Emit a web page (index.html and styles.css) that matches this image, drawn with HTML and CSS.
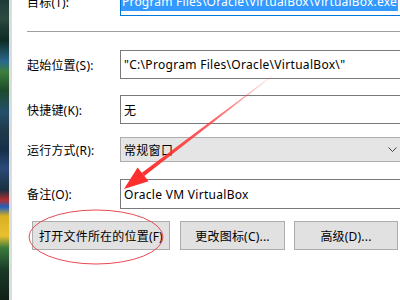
FILE: index.html
```html
<!DOCTYPE html>
<html lang="zh-CN">

<head>
    <meta charset="UTF-8">
    <title>VirtualBox 属性</title>
    <link rel="stylesheet" href="styles.css">
</head>

<body>
    <div class="desk"></div>
    <div class="edge"></div>

    <div class="dialog">
        <div class="row row-target">
            <label class="lbl">目标(T):</label>
            <div class="field field-active">
                <span class="sel">Program Files\Oracle\VirtualBox\VirtualBox.exe</span>
                <i class="caret"></i>
            </div>
        </div>

        <div class="sep"></div>

        <div class="row row-start">
            <label class="lbl">起始位置(S):</label>
            <div class="field">"C:\Program Files\Oracle\VirtualBox\"</div>
        </div>

        <div class="row row-key">
            <label class="lbl">快捷键(K):</label>
            <div class="field">无</div>
        </div>

        <div class="row row-run">
            <label class="lbl">运行方式(R):</label>
            <div class="field combo">
                <span class="flexgrow">常规窗口</span>
                <svg class="chevron" width="9" height="5" viewBox="0 0 9 5">
                    <polyline points="0.5,0.5 4.5,4.5 8.5,0.5" fill="none" stroke="#404040" stroke-width="1" />
                </svg>
            </div>
        </div>

        <div class="row row-note">
            <label class="lbl">备注(O):</label>
            <div class="field">Oracle VM VirtualBox</div>
        </div>

        <div class="buttons">
            <button class="btn btn-open">打开文件所在的位置(F)</button>
            <button class="btn btn-icon">更改图标(C)...</button>
            <button class="btn btn-adv">高级(D)...</button>
        </div>
    </div>

    <!-- hand drawn marks on top of the screenshot -->
    <svg class="marks" width="400" height="300" viewBox="0 0 400 300">
        <defs>
            <linearGradient id="fade" gradientUnits="userSpaceOnUse" x1="272" y1="76" x2="140" y2="176">
                <stop offset="0" stop-color="#ff3b3b" stop-opacity="0.15" />
                <stop offset="0.45" stop-color="#ff3b3b" stop-opacity="0.8" />
                <stop offset="1" stop-color="#ff2e2e" stop-opacity="1" />
            </linearGradient>
        </defs>
        <polygon points="272.2,76.2 271.8,75.8 141.9,172.8 144.3,176.0" fill="url(#fade)" />
        <polygon points="124,189 137.6,167.6 148.6,181.2" fill="#ff2e2e" />
        <ellipse cx="96" cy="237" rx="67" ry="27" fill="none" stroke="#e84a55" stroke-width="1" />
    </svg>
</body>

</html>
```

FILE: styles.css
```css
html,
body {
    margin: 0;
    width: 400px;
    height: 300px;
    overflow: hidden;
}

body {
    display: flex;
    position: relative;
    background: #fff;
    font-family: "Noto Sans", "Noto Sans CJK SC", sans-serif;
    font-size: 12px;
    color: #000;
}

.desk {
    width: 9px;
    flex: none;
    background: linear-gradient(180deg,
            #1d3a3a 0px, #2c4a40 18px, #0e2a24 40px,
            #2a6a8c 62px, #3d7f3a 72px, #1c4a2c 90px,
            #24506a 112px, #1f3a4a 130px, #16304a 150px,
            #2a4a78 168px, #1a3040 190px, #b03030 200px,
            #2060c0 207px, #d8b020 216px, #e8c030 236px,
            #3a7a3a 248px, #1a3a28 270px, #102018 300px);
}

.edge {
    width: 3px;
    flex: none;
    background: #dcdcdc;
}

.dialog {
    flex: 1;
    padding: 0 4px 0 15px;
}

.row {
    display: flex;
    align-items: center;
    height: 29px;
}

.lbl {
    width: 93px;
    flex: none;
    white-space: nowrap;
    letter-spacing: 0.2px;
}

.field {
    flex: 1;
    height: 100%;
    box-sizing: border-box;
    border: 1px solid #7a7a7a;
    display: flex;
    align-items: center;
    padding-left: 3px;
    white-space: nowrap;
    overflow: hidden;
    letter-spacing: 0.3px;
}

.row-target {
    margin-top: -13px;
}

.field-active {
    border-color: #0078d7;
    padding: 0 2px 0 1px;
    justify-content: flex-end;
}

.sel {
    min-width: 100%;
    text-align: right;
    line-height: 18px;
    letter-spacing: 0.2px;
    background: #3399ff;
    color: #fff;
}

.caret {
    width: 1px;
    height: 18px;
    flex: none;
    background: #e07a20;
}

.sep {
    height: 1px;
    margin: 15px -4px 0 0;
    background: #a0a0a0;
}

.row-start {
    margin-top: 18px;
}

.row-key {
    margin-top: 16px;
}

.row-run {
    height: 25px;
    margin-top: 13px;
}

.combo {
    background: #e5e5e5;
    border-color: #adadad;
    padding-right: 3px;
}

.flexgrow {
    flex-grow: 1;
}

.chevron {
    display: block;
}

.row-note {
    height: 30px;
    margin-top: 17px;
}

.buttons {
    display: flex;
    margin: 12px -2px 0 0;
    padding-left: 5px;
}

.btn {
    height: 29px;
    box-sizing: border-box;
    border: 1px solid #adadad;
    background: #e1e1e1;
    font: inherit;
    letter-spacing: 0.2px;
    color: #000;
    padding: 0;
}

.btn-open {
    width: 138px;
}

.btn-icon {
    width: 105px;
    margin-left: 10px;
}

.btn-adv {
    width: 104px;
    margin-left: 9px;
}

.marks {
    position: absolute;
    left: 0;
    top: 0;
    pointer-events: none;
}
```
